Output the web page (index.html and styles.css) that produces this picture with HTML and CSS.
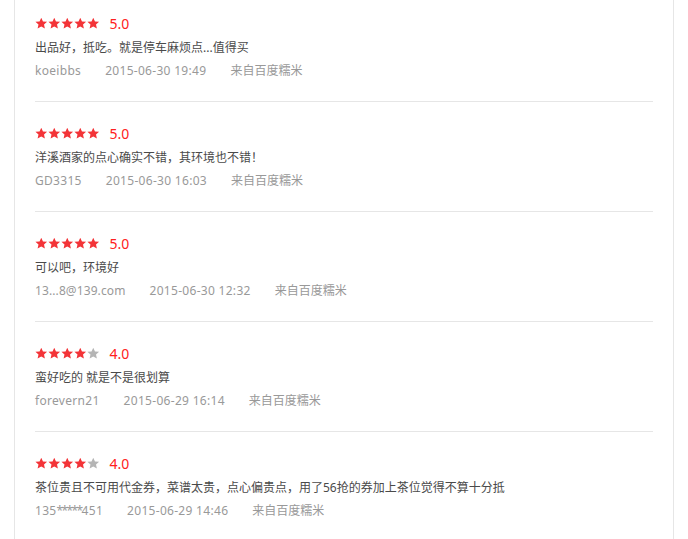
FILE: index.html
```html
<!DOCTYPE html>
<html lang="zh">
<head>
<meta charset="utf-8">
<link rel="stylesheet" href="styles.css">
</head>
<body>
<svg width="0" height="0" class="defs">
  <defs>
    <symbol id="star" viewBox="0 0 24 24"><path d="M12 1.2l3.3 7.2 7.9.8-5.9 5.3 1.7 7.8L12 18.3l-7 4 1.7-7.8L.8 9.2l7.9-.8z"/></symbol>
  </defs>
</svg>
<div class="list">
  <div class="review">
    <div class="rating">
      <span class="stars"><svg class="on"><use href="#star"/></svg><svg class="on"><use href="#star"/></svg><svg class="on"><use href="#star"/></svg><svg class="on"><use href="#star"/></svg><svg class="on"><use href="#star"/></svg></span>
      <span class="score">5.0</span>
    </div>
    <p class="text">出品好，抵吃。就是停车麻烦点...值得买</p>
    <div class="meta"><span class="latin">koeibbs</span><span class="latin">2015-06-30 19:49</span><span>来自百度糯米</span></div>
  </div>
  <div class="review">
    <div class="rating">
      <span class="stars"><svg class="on"><use href="#star"/></svg><svg class="on"><use href="#star"/></svg><svg class="on"><use href="#star"/></svg><svg class="on"><use href="#star"/></svg><svg class="on"><use href="#star"/></svg></span>
      <span class="score">5.0</span>
    </div>
    <p class="text">洋溪酒家的点心确实不错，其环境也不错！</p>
    <div class="meta"><span class="latin">GD3315</span><span class="latin">2015-06-30 16:03</span><span>来自百度糯米</span></div>
  </div>
  <div class="review">
    <div class="rating">
      <span class="stars"><svg class="on"><use href="#star"/></svg><svg class="on"><use href="#star"/></svg><svg class="on"><use href="#star"/></svg><svg class="on"><use href="#star"/></svg><svg class="on"><use href="#star"/></svg></span>
      <span class="score">5.0</span>
    </div>
    <p class="text">可以吧，环境好</p>
    <div class="meta"><span class="latin tight">13...8@139.com</span><span class="latin">2015-06-30 12:32</span><span>来自百度糯米</span></div>
  </div>
  <div class="review">
    <div class="rating">
      <span class="stars"><svg class="on"><use href="#star"/></svg><svg class="on"><use href="#star"/></svg><svg class="on"><use href="#star"/></svg><svg class="on"><use href="#star"/></svg><svg class="off"><use href="#star"/></svg></span>
      <span class="score">4.0</span>
    </div>
    <p class="text">蛮好吃的 就是不是很划算</p>
    <div class="meta"><span class="latin">forevern21</span><span class="latin">2015-06-29 16:14</span><span>来自百度糯米</span></div>
  </div>
  <div class="review">
    <div class="rating">
      <span class="stars"><svg class="on"><use href="#star"/></svg><svg class="on"><use href="#star"/></svg><svg class="on"><use href="#star"/></svg><svg class="on"><use href="#star"/></svg><svg class="off"><use href="#star"/></svg></span>
      <span class="score">4.0</span>
    </div>
    <p class="text">茶位贵且不可用代金券，菜谱太贵，点心偏贵点，用了56抢的券加上茶位觉得不算十分抵</p>
    <div class="meta"><span class="latin">135<span class="mask">*****</span>451</span><span class="latin">2015-06-29 14:46</span><span>来自百度糯米</span></div>
  </div>
</div>
</body>
</html>
```
FILE: styles.css
```css
html, body {
  margin: 0;
  padding: 0;
  background: #fff;
}
body {
  font-family: "Noto Sans", "Noto Sans CJK SC", "Microsoft YaHei", sans-serif;
  overflow: hidden;
  height: 539px;
}
.defs {
  position: absolute;
  width: 0;
  height: 0;
}
.list {
  margin-left: 14px;
  width: 618px;
  padding: 0 20px;
  border-left: 1px solid #e6e6e6;
  border-right: 1px solid #e6e6e6;
  min-height: 539px;
}
.review {
  padding: 22px 0 19px;
  border-bottom: 1px solid #e6e6e6;
}
.review:first-child {
  padding-top: 14px;
}
.rating {
  display: flex;
  align-items: center;
  height: 20px;
}
.stars {
  display: flex;
  gap: 0.5px;
  margin-top: -1px;
}
.stars svg {
  width: 12.5px;
  height: 12.5px;
}
.stars .on { fill: #f33438; }
.stars .off { fill: #b5b5b5; }
.score {
  margin-left: 10px;
  font-size: 14px;
  color: #ff2020;
  line-height: 20px;
}
.text {
  margin: 2px 0 0;
  font-size: 12px;
  line-height: 24px;
  color: #4a4a4a;
}
.meta {
  display: flex;
  gap: 24px;
  font-size: 12px;
  line-height: 22px;
  color: #999;
}
.meta .latin {
  letter-spacing: 0.3px;
}
.meta .latin.tight {
  letter-spacing: 0.1px;
}
.meta .mask {
  letter-spacing: -1.6px;
}
```
